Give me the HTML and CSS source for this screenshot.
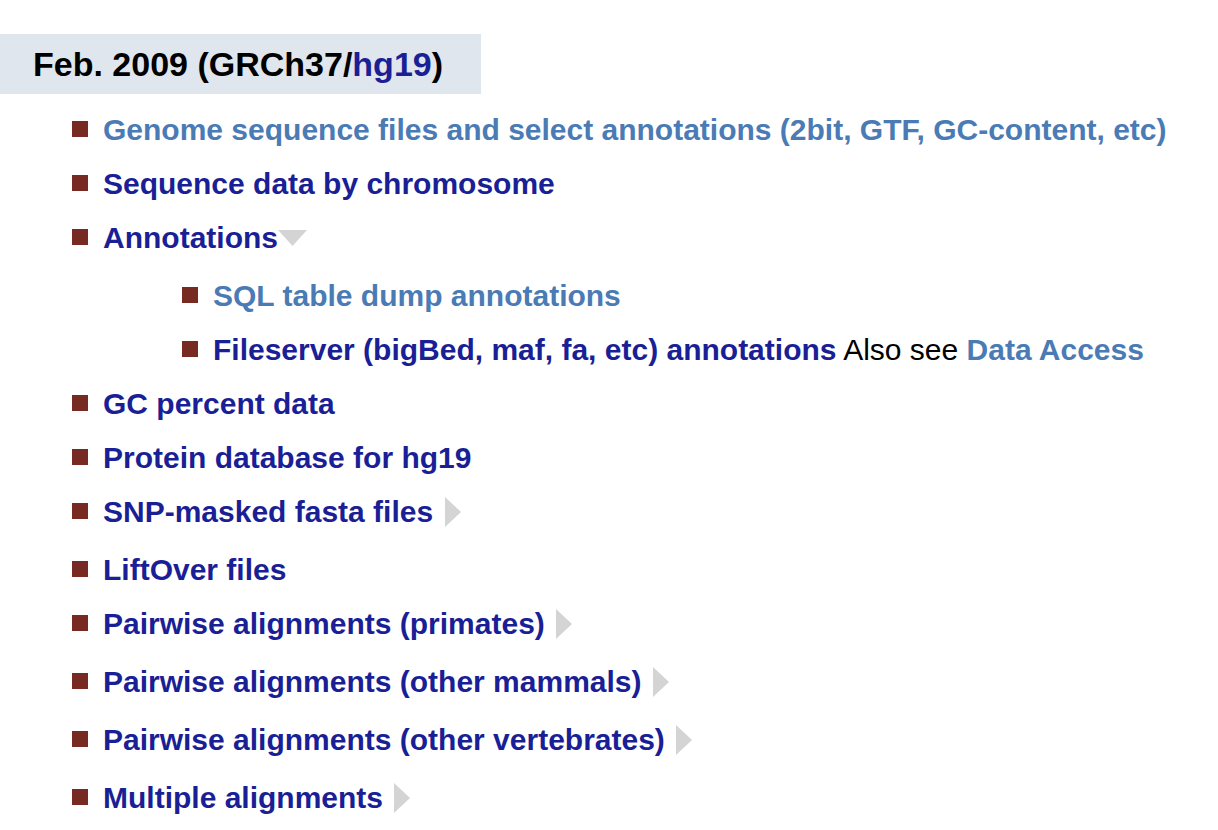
FILE: index.html
```html
<!DOCTYPE html>
<html>
<head>
<meta charset="utf-8">
<title>hg19 downloads</title>
<link rel="stylesheet" href="styles.css">
</head>
<body>
<div class="assembly-head">Feb. 2009 (GRCh37/<a class="link" href="#">hg19</a>)</div>
<ul class="dl-list">
  <li><a class="link visited" href="#">Genome sequence files and select annotations (2bit, GTF, GC-content, etc)</a></li>
  <li><a class="link" href="#">Sequence data by chromosome</a></li>
  <li><a class="link" href="#">Annotations</a><svg class="arrow-down" width="30" height="38" viewBox="0 0 30 38"><polygon points="0,9 29,9 14.5,25" fill="#d4d4d4"/></svg>
    <ul class="dl-sub">
      <li><a class="link visited" href="#">SQL table dump annotations</a></li>
      <li><a class="link" href="#">Fileserver (bigBed, maf, fa, etc) annotations</a> <span class="plain">Also see</span> <a class="link visited" href="#">Data Access</a></li>
    </ul>
  </li>
  <li><a class="link" href="#">GC percent data</a></li>
  <li><a class="link" href="#">Protein database for hg19</a></li>
  <li><a class="link" href="#">SNP-masked fasta files</a> <svg class="arrow-right" width="16" height="38" viewBox="0 0 16 38"><polygon points="0,2 16,17 0,32" fill="#d4d4d4"/></svg></li>
  <li><a class="link" href="#">LiftOver files</a></li>
  <li><a class="link" href="#">Pairwise alignments (primates)</a> <svg class="arrow-right" width="16" height="38" viewBox="0 0 16 38"><polygon points="0,2 16,17 0,32" fill="#d4d4d4"/></svg></li>
  <li><a class="link" href="#">Pairwise alignments (other mammals)</a> <svg class="arrow-right" width="16" height="38" viewBox="0 0 16 38"><polygon points="0,2 16,17 0,32" fill="#d4d4d4"/></svg></li>
  <li><a class="link" href="#">Pairwise alignments (other vertebrates)</a> <svg class="arrow-right" width="16" height="38" viewBox="0 0 16 38"><polygon points="0,2 16,17 0,32" fill="#d4d4d4"/></svg></li>
  <li><a class="link" href="#">Multiple alignments</a> <svg class="arrow-right" width="16" height="38" viewBox="0 0 16 38"><polygon points="0,2 16,17 0,32" fill="#d4d4d4"/></svg></li>
</ul>
</body>
</html>
```
FILE: styles.css
```css
html, body {
  margin: 0;
  padding: 0;
  background: #ffffff;
}
body {
  font-family: "Liberation Sans", Arial, Helvetica, sans-serif;
  color: #000;
  padding-top: 34px;
}
.assembly-head {
  width: 481px;
  box-sizing: border-box;
  padding: 10px 0 10px 33px;
  background: #dfe6ee;
  font-size: 34px;
  line-height: 40px;
  font-weight: bold;
  color: #000;
}
.link {
  color: #1a1f96;
  font-weight: bold;
  text-decoration: none;
}
.link.visited {
  color: #4a7bb5;
}
.plain {
  font-weight: normal;
  color: #000;
}
.dl-list, .dl-sub {
  list-style: none;
  margin: 0;
}
.dl-list {
  margin-top: -1px;
  padding-left: 72px;
}
.dl-sub {
  padding-left: 110px;
}
.dl-list li {
  margin-top: 20px;
  font-size: 30px;
  line-height: 34px;
  white-space: nowrap;
}
.dl-list li::before {
  content: "";
  display: inline-block;
  width: 16px;
  height: 16px;
  margin-right: 15px;
  background: #772a22;
  vertical-align: 3px;
}
.arrow-right, .arrow-down {
  vertical-align: middle;
}
.arrow-right {
  margin-left: 3px;
}
```
